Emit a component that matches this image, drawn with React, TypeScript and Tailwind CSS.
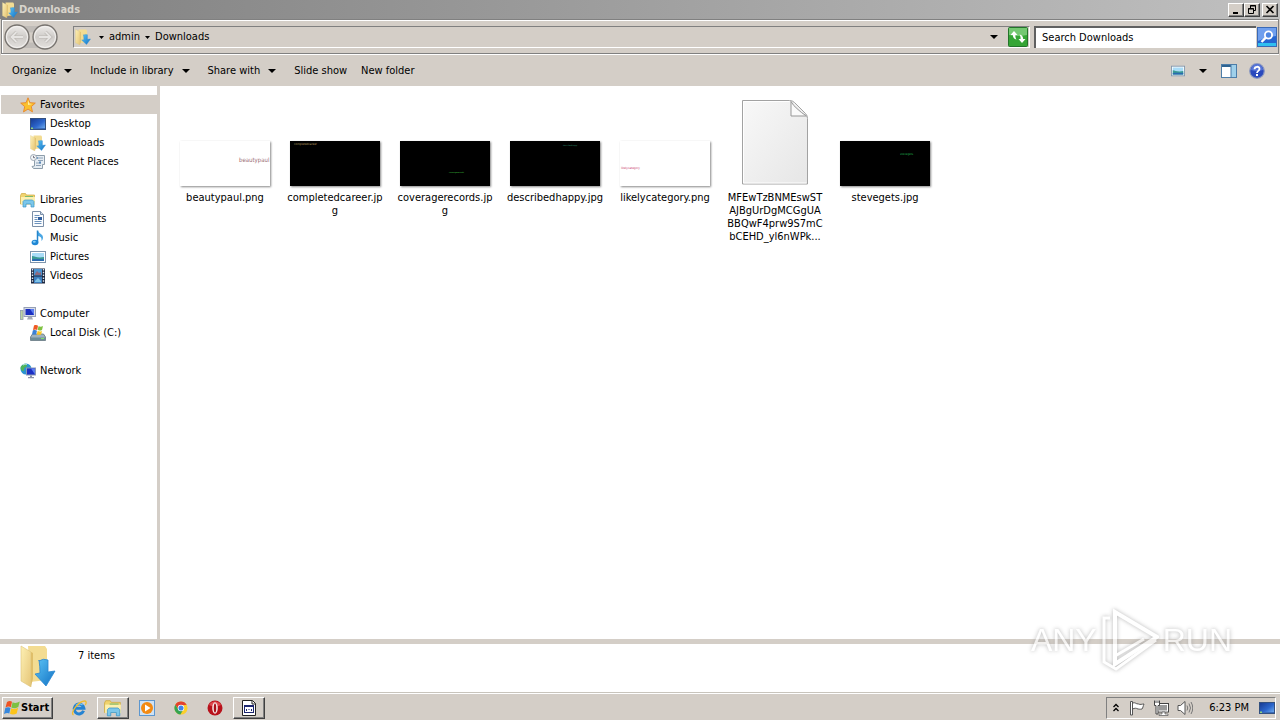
import type { ReactNode } from 'react'

type IconProps = { className?: string }

const FONT = "font-['Tahoma','DejaVu_Sans_Condensed',sans-serif]"

/* ---------- icons ---------- */

function FolderDown({ className = 'size-4' }: IconProps) {
  return (
    <svg viewBox="0 0 36 42" preserveAspectRatio="none" className={className} aria-hidden="true">
      <defs>
        <linearGradient id="fold" x1="0" y1="0" x2="1" y2="1">
          <stop offset="0" stopColor="#fdf0b4" />
          <stop offset="1" stopColor="#e6c678" />
        </linearGradient>
        <linearGradient id="arr" x1="0" y1="0" x2="1" y2="1">
          <stop offset="0" stopColor="#5cc4f6" />
          <stop offset="1" stopColor="#1272c4" />
        </linearGradient>
      </defs>
      <path d="M8 1h17l2 3v31l-17 2z" fill="#f3dc92" />
      <path d="M1 1l10 6v35L1 36z" fill="url(#fold)" stroke="#dcc27a" strokeWidth=".6" />
      <path d="M11 7l2 1v26l-2 7z" fill="#dfbe6a" />
      <path d="M19 16q4-3 9-1v12l7-1-9 15-11-12 5-1q0-6-1-13z" fill="url(#arr)" stroke="#2a86d0" strokeWidth=".8" />
    </svg>
  )
}

function Star() {
  return (
    <svg viewBox="0 0 16 16" className="size-4" aria-hidden="true">
      <path d="M8 .8l2 4.9 5.300.4-4 3.500 1.200 5.300L8 12.100l-4.500 2.800 1.200-5.300-4-3.500 5.300-.4z" fill="#fbc02d" stroke="#e8862a" strokeWidth=".9" />
      <path d="M8 3l1.200 3.600 3 .3-4.200 1z" fill="#fff0a8" />
    </svg>
  )
}

function Monitor() {
  return (
    <svg viewBox="0 0 16 16" className="size-4" aria-hidden="true">
      <defs>
        <linearGradient id="scr" x1="0" y1="0" x2="1" y2="1">
          <stop offset="0" stopColor="#16388f" />
          <stop offset=".55" stopColor="#2c66cc" />
          <stop offset="1" stopColor="#7db9f2" />
        </linearGradient>
      </defs>
      <rect x=".5" y="2.500" width="15" height="11" fill="url(#scr)" stroke="#33507f" />
      <path d="M1 12h14v1H1z" fill="#3a6bb8" />
      <path d="M1 11.500h2V13H1z" fill="#8fd27c" />
    </svg>
  )
}

function Recent() {
  return (
    <svg viewBox="0 0 16 16" className="size-4" aria-hidden="true">
      <path d="M4.500 1.500h10v9h-2v4h-9l-1.500-2 2.500-.5z" fill="#e6edf3" stroke="#8d9daa" />
      <path d="M8 4h5M8 6.500h5M6 9h5M6 11.500h5" stroke="#8fa3b8" />
      <rect x="6" y="3" width="2" height="2" fill="#7aa2c8" />
      <rect x="9" y="7.500" width="2" height="2" fill="#5e8ab8" />
      <circle cx="3.500" cy="3.500" r="3" fill="#f3f6f8" stroke="#9fa9b4" />
      <path d="M3.500 1.800v1.900H5" stroke="#556" strokeWidth=".8" fill="none" />
    </svg>
  )
}

function Libraries({ className = 'size-4' }: IconProps) {
  return (
    <svg viewBox="0 0 16 16" className={className} aria-hidden="true">
      <path d="M.5 3.500l1-2h4l1 1.500h8v9H.5z" fill="#f0d36e" stroke="#cfa93f" strokeWidth=".7" />
      <path d="M1 5h14v7.500H1z" fill="#fdf0ae" />
      <path d="M5 4.500h8" stroke="#7dbb6f" />
      <path d="M3 15V9.500l1.500-1.500h8L14 9.500V15h-3v-3H6v3z" fill="#7cc7ea" stroke="#3d95c7" strokeWidth=".7" />
    </svg>
  )
}

function Doc() {
  return (
    <svg viewBox="0 0 16 16" className="size-4" aria-hidden="true">
      <path d="M2.500.5h8l3 3v12h-11z" fill="#fbfdff" stroke="#7b8fa8" />
      <path d="M10.500.5v3h3" fill="#cfdbe8" stroke="#7b8fa8" />
      <path d="M4.500 4.500h5M4.500 6.500h3M4.500 8.500h3M4.500 10.500h7M4.500 12.500h7" stroke="#6c92bd" />
      <rect x="8" y="6" width="4" height="3" fill="#2f5e9e" />
    </svg>
  )
}

function Note() {
  return (
    <svg viewBox="0 0 16 16" className="size-4" aria-hidden="true">
      <path d="M8 .5c.5 3 5.500 3.500 5 7.500-.2 1.500-1 2.500-1.700 3 1-3-.8-4.700-3.300-5z" fill="#4aa7e4" />
      <path d="M7.500.5v12" stroke="#2586cc" strokeWidth="1.500" />
      <ellipse cx="5" cy="12.500" rx="3.400" ry="2.800" fill="#1f87d4" />
      <ellipse cx="4.300" cy="11.800" rx="1.500" ry="1" fill="#86cdf6" />
    </svg>
  )
}

function Picture({ className = 'size-4' }: IconProps) {
  return (
    <svg viewBox="0 0 16 16" className={className} aria-hidden="true">
      <rect x=".5" y="2.500" width="15" height="11" fill="#fff" stroke="#7f95ac" />
      <rect x="2" y="4" width="12" height="8" fill="#a9dcf7" />
      <path d="M2 7c3 0 5 2.500 12 1v4H2z" fill="#3a9a94" />
      <path d="M2 10.500c4-1 8 0 12-.5V12H2z" fill="#2a6ab0" />
    </svg>
  )
}

function Film() {
  return (
    <svg viewBox="0 0 16 16" className="size-4" aria-hidden="true">
      <rect x="1" y=".5" width="14" height="15" fill="#1c2740" />
      <path d="M2.500 1v14M13.500 1v14" stroke="#dfe8f2" strokeWidth="1.400" strokeDasharray="1.500 1.300" />
      <rect x="4" y="1" width="8" height="6.500" fill="#4b94d2" />
      <rect x="4" y="8.500" width="8" height="6.500" fill="#3c7fc0" />
      <path d="M5 6l2-3 2 2 2-1v3H5z" fill="#8d6a80" />
      <path d="M5 13l3-3 3 3v1H5z" fill="#7fc3e8" />
    </svg>
  )
}

function Computer() {
  return (
    <svg viewBox="0 0 16 16" className="size-4" aria-hidden="true">
      <rect x=".5" y="4.500" width="2.500" height="9" fill="#bcd3a2" stroke="#8e9ca8" strokeWidth=".8" />
      <rect x="4" y="1.500" width="11.500" height="9" fill="#d6dbe8" stroke="#959fb4" />
      <rect x="5.500" y="3" width="8.500" height="6" fill="#1a2ec0" />
      <path d="M10 3h4v6z" fill="#5a7cf0" />
      <path d="M8 11h4l1 2.500H7z" fill="#a5abb8" />
    </svg>
  )
}

function Disk() {
  return (
    <svg viewBox="0 0 16 16" className="size-4" aria-hidden="true">
      <path d="M2.500 9h11l2 3v3.500H.5V12z" fill="#9fb2be" stroke="#62757f" strokeWidth=".8" />
      <path d="M1 12.500h14V15H1z" fill="#6d8d98" />
      <rect x="11" y="13" width="3" height="1" fill="#7ee36c" />
      <path d="M4 .6c1.500-.8 3-.6 4 .2L7.200 5C6 4.200 4.800 4.200 3 5z" fill="#ee5a24" />
      <path d="M8.500 1.200c1.500.6 3 .6 4.500-.1L12 5c-1.500.8-3.200.7-4.300.1z" fill="#7fc241" />
      <path d="M2.800 5.500c1.500-.8 3-.6 4.200.2l-.9 3.800H2z" fill="#3b82d6" />
      <path d="M7.600 6c1.500.6 2.900.6 4.400-.1L11 9.800H6.700z" fill="#fbc520" />
    </svg>
  )
}

function Network() {
  return (
    <svg viewBox="0 0 16 16" className="size-4" aria-hidden="true">
      <circle cx="6" cy="6" r="5.500" fill="#2a93d0" />
      <path d="M2 2.500c3-3 5-1.500 5 0S4 4 4 6.500 1.500 8 .8 6 1 3.500 2 2.500zM6 8l3-1v4l-2 .3z" fill="#4fb45a" />
      <path d="M3 2c2-1 3-1 4-.5" stroke="#c5edf7" fill="none" />
      <rect x="6.500" y="5" width="9" height="7" fill="#1b2fc4" stroke="#8a97b4" />
      <path d="M11 5.500h4v6z" fill="#5a7cf0" />
      <path d="M10 12.500h2V14h2v1.200H8V14h2z" fill="#8b93a8" />
    </svg>
  )
}

function Caret() {
  return (
    <svg viewBox="0 0 8 4" className="h-1 w-2 shrink-0" aria-hidden="true">
      <path d="M0 0h8L4 4z" fill="#000" />
    </svg>
  )
}

function SmallCaret() {
  return (
    <svg viewBox="0 0 5 3" className="h-[3px] w-[5px] shrink-0" aria-hidden="true">
      <path d="M0 0h5L2.500 3z" fill="#000" />
    </svg>
  )
}

function NavArrows() {
  return (
    <svg viewBox="0 0 56 28" className="h-7 w-14" aria-hidden="true">
      <defs>
        <linearGradient id="orb" x1="0" y1="0" x2="0" y2="1">
          <stop offset="0" stopColor="#efedeb" />
          <stop offset=".5" stopColor="#cfccc9" />
          <stop offset="1" stopColor="#e4e1de" />
        </linearGradient>
      </defs>
      <path d="M14 3h28v4q-14 5-28 0zM14 25h28v-3q-14-5-28 0z" fill="#c0bcb8" />
      <circle cx="14" cy="14" r="12" fill="url(#orb)" stroke="#77736f" strokeWidth="1.300" />
      <circle cx="42" cy="14" r="12" fill="url(#orb)" stroke="#77736f" strokeWidth="1.300" />
      <circle cx="14" cy="14" r="10.500" fill="none" stroke="#f4f2f0" />
      <circle cx="42" cy="14" r="10.500" fill="none" stroke="#f4f2f0" />
      <path d="M20 14H8.500m5-5l-5 5 5 5M36 14h11.500m-5-5l5 5-5 5" fill="none" stroke="#bcb8b4" strokeWidth="3.200" />
      <path d="M20 14H8.500m5-5l-5 5 5 5M36 14h11.500m-5-5l5 5-5 5" fill="none" stroke="#e6e4e2" strokeWidth="1.800" />
    </svg>
  )
}

function Refresh() {
  return (
    <svg viewBox="0 0 20 20" className="size-5" aria-hidden="true">
      <rect x=".5" y=".5" width="19" height="19" rx="1" fill="#35a535" stroke="#23742a" />
      <path d="M1 1h18v7Q10 10 1 8z" fill="#74c872" />
      <path d="M6 4L2.500 8h2.300C5 10.500 6 12 8.500 12.500 7.500 11 7.300 9.500 7.400 8h2.100z" fill="#fff" />
      <path d="M14 16l3.500-4h-2.300C15 9.500 14 8 11.500 7.500c1 1.500 1.200 3 1.100 4.500h-2.100z" fill="#fff" />
    </svg>
  )
}

function SearchIcon() {
  return (
    <svg viewBox="0 0 20 20" className="size-5" aria-hidden="true">
      <rect x=".5" y=".5" width="19" height="19" fill="#2466d2" stroke="#3a69b5" />
      <path d="M1 1h18v8Q9 10 1 14z" fill="#6f9fee" />
      <path d="M1 16h18v3H1z" fill="#30bff0" />
      <circle cx="11.500" cy="8" r="3.600" fill="#4e86e2" stroke="#fff" strokeWidth="1.800" />
      <path d="M8.800 10.700l-4.300 4.300" stroke="#fff" strokeWidth="2.400" />
    </svg>
  )
}

function PaneIcon() {
  return (
    <svg viewBox="0 0 16 14" className="h-3.5 w-4" aria-hidden="true">
      <rect x=".5" y=".5" width="15" height="13" fill="#fff" stroke="#4d7da8" />
      <path d="M1 2h9" stroke="#2e6391" strokeWidth="2" />
      <rect x="10" y="1" width="5" height="12" fill="#9fd0ea" />
      <path d="M10 1v12" stroke="#4d7da8" />
    </svg>
  )
}

function HelpIcon() {
  return (
    <svg viewBox="0 0 16 16" className="size-4" aria-hidden="true">
      <circle cx="8" cy="8" r="7.300" fill="#2a49bd" stroke="#8c99c0" strokeWidth="1.200" />
      <path d="M2 7a6 6 0 0 1 12 0Q8 9 2 7z" fill="#5674d6" />
      <path d="M5.500 6.200C5.600 3 10.600 3 10.500 6c0 1.800-2.500 2-2.500 4" fill="none" stroke="#fff" strokeWidth="1.800" />
      <rect x="7" y="11" width="2" height="2" fill="#fff" />
    </svg>
  )
}

function WinFlag() {
  return (
    <svg viewBox="0 0 16 16" className="size-4" aria-hidden="true">
      <path d="M3 2C5 .5 7 1 8 1.700L6.800 7.200C5.200 6.200 3.500 6.500 1.500 7.500z" fill="#ee5324" />
      <path d="M8.600 2.200c2 1.200 4.400.9 7.200-.7L14.300 7c-2.800 1.600-4.900 1.600-7 .6z" fill="#7cc142" />
      <path d="M1.300 8.100c2-1.200 3.800-1 5.200-.1L5.300 13.500C4 12.700 2.200 12.800 0 14z" fill="#3687dd" />
      <path d="M7.200 8.300c2 1 4.200.9 6.900-.5l-1.400 5.600c-2.400 1.400-4.600 1.400-6.700.3z" fill="#fcc419" />
    </svg>
  )
}

function IeIcon() {
  return (
    <svg viewBox="0 0 16 16" className="size-4" aria-hidden="true">
      <path d="M12.600 10.800A4.900 4.900 0 1 1 12.900 8.300H4" fill="none" stroke="#2583d2" strokeWidth="3" />
      <path d="M5 5.500A4.500 4.500 0 0 1 11.500 5" fill="none" stroke="#7cc8f6" strokeWidth="1.200" />
      <path d="M2.500 14.800C-1.500 13 8 .8 14 1c1.700.3 1.300 2.500.3 4" fill="none" stroke="#f2bc2d" strokeWidth="1.300" />
    </svg>
  )
}

function PlayerIcon() {
  return (
    <svg viewBox="0 0 16 16" className="size-4" aria-hidden="true">
      <rect x=".5" y=".5" width="15" height="15" fill="#cfe2f4" stroke="#5d97cf" />
      <circle cx="8" cy="8" r="6" fill="#f38a12" />
      <path d="M6 4.500v7L11.500 8z" fill="#fff" />
    </svg>
  )
}

function ChromeIcon() {
  return (
    <svg viewBox="0 0 16 16" className="size-3.5" aria-hidden="true">
      <circle cx="8" cy="8" r="7.500" fill="#fbcf2c" />
      <path d="M1.500 4.200A7.500 7.500 0 0 1 14.500 4.300L8 5 5 9.500z" fill="#e2412f" />
      <path d="M1.500 4.200A7.500 7.500 0 0 0 7.300 15.500L10.500 10 5 9.700z" fill="#35a352" />
      <circle cx="8" cy="8" r="3.700" fill="#fff" />
      <circle cx="8" cy="8" r="2.900" fill="#3f83e8" />
    </svg>
  )
}

function OperaIcon() {
  return (
    <svg viewBox="0 0 16 16" className="size-4" aria-hidden="true">
      <circle cx="8" cy="8" r="7.500" fill="#b8121b" />
      <path d="M2 5a7 7 0 0 1 12 0Q8 8 2 5z" fill="#df4a4f" />
      <ellipse cx="8" cy="8" rx="2.800" ry="5.800" fill="#f5e6e4" />
      <ellipse cx="8" cy="8" rx="1.200" ry="4.500" fill="#a80f18" />
    </svg>
  )
}

function AppDocIcon() {
  return (
    <svg viewBox="0 0 14 16" className="h-4 w-3.5" aria-hidden="true">
      <path d="M.5.5h10l3 3v12H.5z" fill="#fff" stroke="#222" />
      <path d="M10 .5V4h3.500" fill="none" stroke="#222" />
      <rect x="2.500" y="5.500" width="9" height="7" fill="#fff" stroke="#1b2470" />
      <path d="M2 6h10" stroke="#1b2470" strokeWidth="2" />
      <path d="M4.500 9v2M7 9v1M9.500 9v2" stroke="#1b2470" />
    </svg>
  )
}

/* ---------- window ---------- */

const raised =
  'border border-t-white border-l-white border-r-[#404040] border-b-[#404040] bg-[#d4cec7] shadow-[inset_-1px_-1px_0_#808080]'

function TitleBar() {
  return (
    <header className="flex h-[19px] shrink-0 items-center bg-linear-to-r from-[#808080] to-[#c0c0c0] px-0.5">
      <FolderDown />
      <h1 className="ml-px flex-1 text-[11px] leading-4 font-bold text-[#d8d4cc]">Downloads</h1>
      <button aria-label="Minimize" className={`flex h-3.5 w-4 items-center justify-center ${raised}`}>
        <svg viewBox="0 0 10 9" className="h-[9px] w-2.5"><path d="M2 7h5v2H2z" /></svg>
      </button>
      <button aria-label="Restore" className={`flex h-3.5 w-4 items-center justify-center ${raised}`}>
        <svg viewBox="0 0 10 9" className="h-[9px] w-2.5">
          <path d="M3.500 3V.5h5v5H7M3 1h6M1.500 3.500h5v5h-5zM1 4h6" fill="none" stroke="#000" />
        </svg>
      </button>
      <button aria-label="Close" className={`ml-0.5 flex h-3.5 w-4 items-center justify-center ${raised}`}>
        <svg viewBox="0 0 10 9" className="h-[9px] w-2.5">
          <path d="M1.500 1l7 7M8.500 1l-7 7" stroke="#000" strokeWidth="1.600" />
        </svg>
      </button>
    </header>
  )
}

function AddressBar() {
  return (
    <div className="mx-px flex h-[35px] shrink-0 items-center border border-[#808080] bg-[#d4cec7] pt-px shadow-[inset_1px_1px_0_#fff,0_1px_0_#fff]">
      <button aria-label="Back and forward" className="ml-px"><NavArrows /></button>
      <div className="ml-3.5 flex h-[22px] flex-1 items-center border border-t-[#808080] border-r-white border-b-white border-l-[#808080] pl-px">
        <FolderDown />
        <div className="ml-2 flex flex-1 items-center gap-[5px]">
          <SmallCaret />
          <a href="#admin">admin</a>
          <SmallCaret />
          <a href="#downloads">Downloads</a>
        </div>
        <button aria-label="Previous locations" className="mr-2.5"><Caret /></button>
        <button aria-label="Refresh" className="mr-px"><Refresh /></button>
      </div>
      <div className="ml-1 flex h-[22px] w-[222px] border-t-2 border-l-2 border-t-[#606060] border-l-[#606060] bg-white">
        <input
          aria-label="Search Downloads"
          placeholder="Search Downloads"
          className="w-full bg-transparent pl-1.5 outline-none placeholder:text-black"
        />
      </div>
      <button aria-label="Search" className="mx-px"><SearchIcon /></button>
    </div>
  )
}

const COMMANDS = [
  { label: 'Organize', menu: true },
  { label: 'Include in library', menu: true },
  { label: 'Share with', menu: true },
  { label: 'Slide show', menu: false },
  { label: 'New folder', menu: false },
]

function CommandBar() {
  return (
    <div className="flex h-8 shrink-0 items-center pt-px pr-[15px] pl-3">
      <div className="flex flex-1 items-center">
        {COMMANDS.map((c) => (
          <button key={c.label} className={c.menu ? 'mr-[18px] flex items-center gap-2' : 'mr-3.5'}>
            {c.label}
            {c.menu && <Caret />}
          </button>
        ))}
      </div>
      <button aria-label="Change view" className="mr-3.5"><Picture className="size-3.5" /></button>
      <button aria-label="More views" className="mr-3.5"><Caret /></button>
      <button aria-label="Preview pane" className="mr-3"><PaneIcon /></button>
      <button aria-label="Help"><HelpIcon /></button>
    </div>
  )
}

/* ---------- navigation pane ---------- */

type Group = { label: string; icon: ReactNode; active?: boolean; items: { label: string; icon: ReactNode }[] }

const GROUPS: Group[] = [
  {
    label: 'Favorites',
    icon: <Star />,
    active: true,
    items: [
      { label: 'Desktop', icon: <Monitor /> },
      { label: 'Downloads', icon: <FolderDown /> },
      { label: 'Recent Places', icon: <Recent /> },
    ],
  },
  {
    label: 'Libraries',
    icon: <Libraries />,
    items: [
      { label: 'Documents', icon: <Doc /> },
      { label: 'Music', icon: <Note /> },
      { label: 'Pictures', icon: <Picture /> },
      { label: 'Videos', icon: <Film /> },
    ],
  },
  { label: 'Computer', icon: <Computer />, items: [{ label: 'Local Disk (C:)', icon: <Disk /> }] },
  { label: 'Network', icon: <Network />, items: [] },
]

function NavPane() {
  return (
    <nav className="flex w-40 shrink-0 flex-col gap-[19px] border-r-[3px] border-[#d4cec7] bg-white pt-[9px] pl-px">
      {GROUPS.map((g) => (
        <div key={g.label}>
          <a href="#" className={`flex h-[19px] items-center gap-1 pl-[19px] leading-[18px] ${g.active ? 'bg-[#d4cec7]' : ''}`}>
            {g.icon}
            {g.label}
          </a>
          {g.items.map((it) => (
            <a key={it.label} href="#" className="flex h-[19px] items-center gap-1 pl-[29px] leading-[18px]">
              {it.icon}
              {it.label}
            </a>
          ))}
        </div>
      ))}
    </nav>
  )
}

/* ---------- files ---------- */

function Thumb({ dark, children }: { dark?: boolean; children: ReactNode }) {
  return (
    <svg
      viewBox="0 0 90 45"
      aria-hidden="true"
      className={`h-[45px] w-[90px] shadow-[1px_1px_2px_#888] ${dark ? 'bg-black' : 'bg-white'}`}
    >
      {children}
    </svg>
  )
}

function BlankFile() {
  return (
    <svg viewBox="0 0 68 86" className="h-[87px] w-[68px]" aria-hidden="true">
      <defs>
        <linearGradient id="sheet" x1="0" y1="0" x2="1" y2="1">
          <stop offset="0" stopColor="#f8f8f8" />
          <stop offset="1" stopColor="#e6e6e6" />
        </linearGradient>
      </defs>
      <path d="M1.500 1h47q3 0 5 2l11 11q2 2 2 5v65.500h-65z" fill="url(#sheet)" stroke="#a2a2a2" />
      <path d="M2.500 2h46M2.500 2v81.500h63" fill="none" stroke="#fff" />
      <path d="M50 2v14.500h15.500Q60 13 57 10 52 6 50 2z" fill="#fafafa" stroke="#979797" />
    </svg>
  )
}

const FILES: { lines: string[]; art: ReactNode }[] = [
  {
    lines: ['beautypaul.png'],
    art: <Thumb><text x="59" y="21" fontSize="6" fill="#9b6d73">beautypaul</text></Thumb>,
  },
  {
    lines: ['completedcareer.jp', 'g'],
    art: <Thumb dark><text x="4" y="4" fontSize="3" fill="#b39a5e">completedcareer</text></Thumb>,
  },
  {
    lines: ['coveragerecords.jp', 'g'],
    art: <Thumb dark><text x="49" y="32" fontSize="2" fill="#3fc03f">coveragerecords</text></Thumb>,
  },
  {
    lines: ['describedhappy.jpg'],
    art: <Thumb dark><text x="53" y="5" fontSize="2" fill="#2d8a6a">describedhappy</text></Thumb>,
  },
  {
    lines: ['likelycategory.png'],
    art: <Thumb><text x="1" y="28" fontSize="3" fill="#c93a6a">likelycategory</text></Thumb>,
  },
  { lines: ['MFEwTzBNMEswST', 'AJBgUrDgMCGgUA', 'BBQwF4prw9S7mC', 'bCEHD_yl6nWPk...'], art: <BlankFile /> },
  {
    lines: ['stevegets.jpg'],
    art: <Thumb dark><text x="60" y="14" fontSize="3" fill="#1fa64a">stevegets</text></Thumb>,
  },
]

function FileGrid() {
  return (
    <main className="flex flex-1 flex-wrap content-start bg-white pt-[13px] pl-2.5">
      {FILES.map((f) => (
        <figure key={f.lines[0]} className="flex w-[110px] flex-col items-center">
          <div className="flex h-[87px] items-end">{f.art}</div>
          <figcaption className="mt-[5px] text-center leading-[13px] whitespace-nowrap">
            {f.lines.map((l) => (
              <span key={l} className="block">{l}</span>
            ))}
          </figcaption>
        </figure>
      ))}
    </main>
  )
}

function Watermark() {
  const text = "font-['Liberation_Sans',sans-serif] text-[32px] leading-10 text-white"
  return (
    <div className="pointer-events-none absolute right-12 bottom-12 flex items-center gap-1 opacity-70 drop-shadow-[0_0_2px_#999]">
      <span className={text}>ANY</span>
      <svg viewBox="0 0 58 64" className="h-16 w-[58px]" aria-hidden="true">
        <path d="M14 4l42 25-42 27z" fill="none" stroke="#fff" strokeWidth="4" />
        <path d="M14 48l29-17" fill="none" stroke="#fff" strokeWidth="3" />
        <path d="M9 10H3v44l12 7 40-29" fill="none" stroke="#fff" strokeWidth="3" />
      </svg>
      <span className={text}>RUN</span>
    </div>
  )
}

/* ---------- taskbar ---------- */

function TaskButton({ label, active, children }: { label: string; active?: boolean; children: ReactNode }) {
  return (
    <button aria-label={label} className={`flex h-[22px] w-8 items-center justify-center ${active ? raised : ''}`}>
      {children}
    </button>
  )
}

function Taskbar() {
  return (
    <footer className="flex h-[27px] shrink-0 items-center border-t border-white bg-[#d4cec7] pt-px pr-1 pl-0.5 shadow-[0_-1px_0_#c8c4bc]">
      <button className={`flex h-[22px] items-center pr-[3px] pl-px font-bold ${raised}`}>
        <WinFlag />
        <span className="ml-px">Start</span>
      </button>
      <div className="ml-2.5 flex flex-1 items-center gap-0.5">
        <TaskButton label="Internet Explorer"><IeIcon /></TaskButton>
        <TaskButton label="Windows Explorer" active><Libraries className="size-[18px]" /></TaskButton>
        <TaskButton label="Media Player"><PlayerIcon /></TaskButton>
        <TaskButton label="Chrome"><ChromeIcon /></TaskButton>
        <TaskButton label="Opera"><OperaIcon /></TaskButton>
        <TaskButton label="Application" active><AppDocIcon /></TaskButton>
      </div>
      <div className="flex h-[22px] items-center border border-t-[#808080] border-r-white border-b-white border-l-[#808080] pl-1.5">
        <button aria-label="Show hidden icons">
          <svg viewBox="0 0 6 9" className="h-[9px] w-1.5">
            <path d="M.5 4L3 1.500 5.500 4M.5 8L3 5.500 5.500 8" fill="none" stroke="#000" strokeWidth="1.300" />
          </svg>
        </button>
        <svg viewBox="0 0 16 16" className="ml-2.5 size-4" aria-hidden="true">
          <path d="M1.500 15V1.500h2V15zM3.500 3c3-1 3 1 6 1 2 1 3 0 5.500 0-1 2-1 4-2 5-2 .5-3 0-4 0-2-1-3-1-5.500 0z" fill="#fff" stroke="#555" />
        </svg>
        <svg viewBox="0 0 16 16" className="ml-2 size-4" aria-hidden="true">
          <rect x="4.500" y="3.500" width="11" height="8.500" fill="#999" stroke="#444" />
          <rect x="5.500" y="4.500" width="9" height="6.500" fill="none" stroke="#fff" />
          <path d="M9 12h3v2h3v1.500H6V14h3z" fill="#fff" stroke="#555" strokeWidth=".7" />
          <path d="M1.500.5v5h1.500V14h2V5.500h1.500v-5M3 .5V3M5 .5V3" fill="#fff" stroke="#444" />
        </svg>
        <svg viewBox="0 0 16 16" className="ml-2 size-4" aria-hidden="true">
          <path d="M1 5.500h2.500L8 1.500v13l-4.500-4H1z" fill="#fff" stroke="#555" />
          <path d="M10 5.500q1.500 2.500 0 5M12 3.500q3 4.500 0 9M14 2q3.500 6 0 12" fill="none" stroke="#777" />
        </svg>
        <time className="ml-4">6:23 PM</time>
        <button aria-label="Show desktop" className="ml-2.5"><Monitor /></button>
      </div>
    </footer>
  )
}

export default function App() {
  return (
    <div className={`relative flex h-screen flex-col overflow-hidden bg-[#d4cec7] text-[11px] leading-4 text-black ${FONT}`}>
      <TitleBar />
      <AddressBar />
      <CommandBar />
      <div className="flex min-h-0 flex-1">
        <NavPane />
        <FileGrid />
      </div>
      <section className="flex h-[54px] shrink-0 border-t-[5px] border-[#d4cec7] bg-white pl-5">
        <FolderDown className="mt-px h-[42px] w-9" />
        <p className="mt-1 ml-[22px]">7 items</p>
      </section>
      <Taskbar />
      <Watermark />
    </div>
  )
}
